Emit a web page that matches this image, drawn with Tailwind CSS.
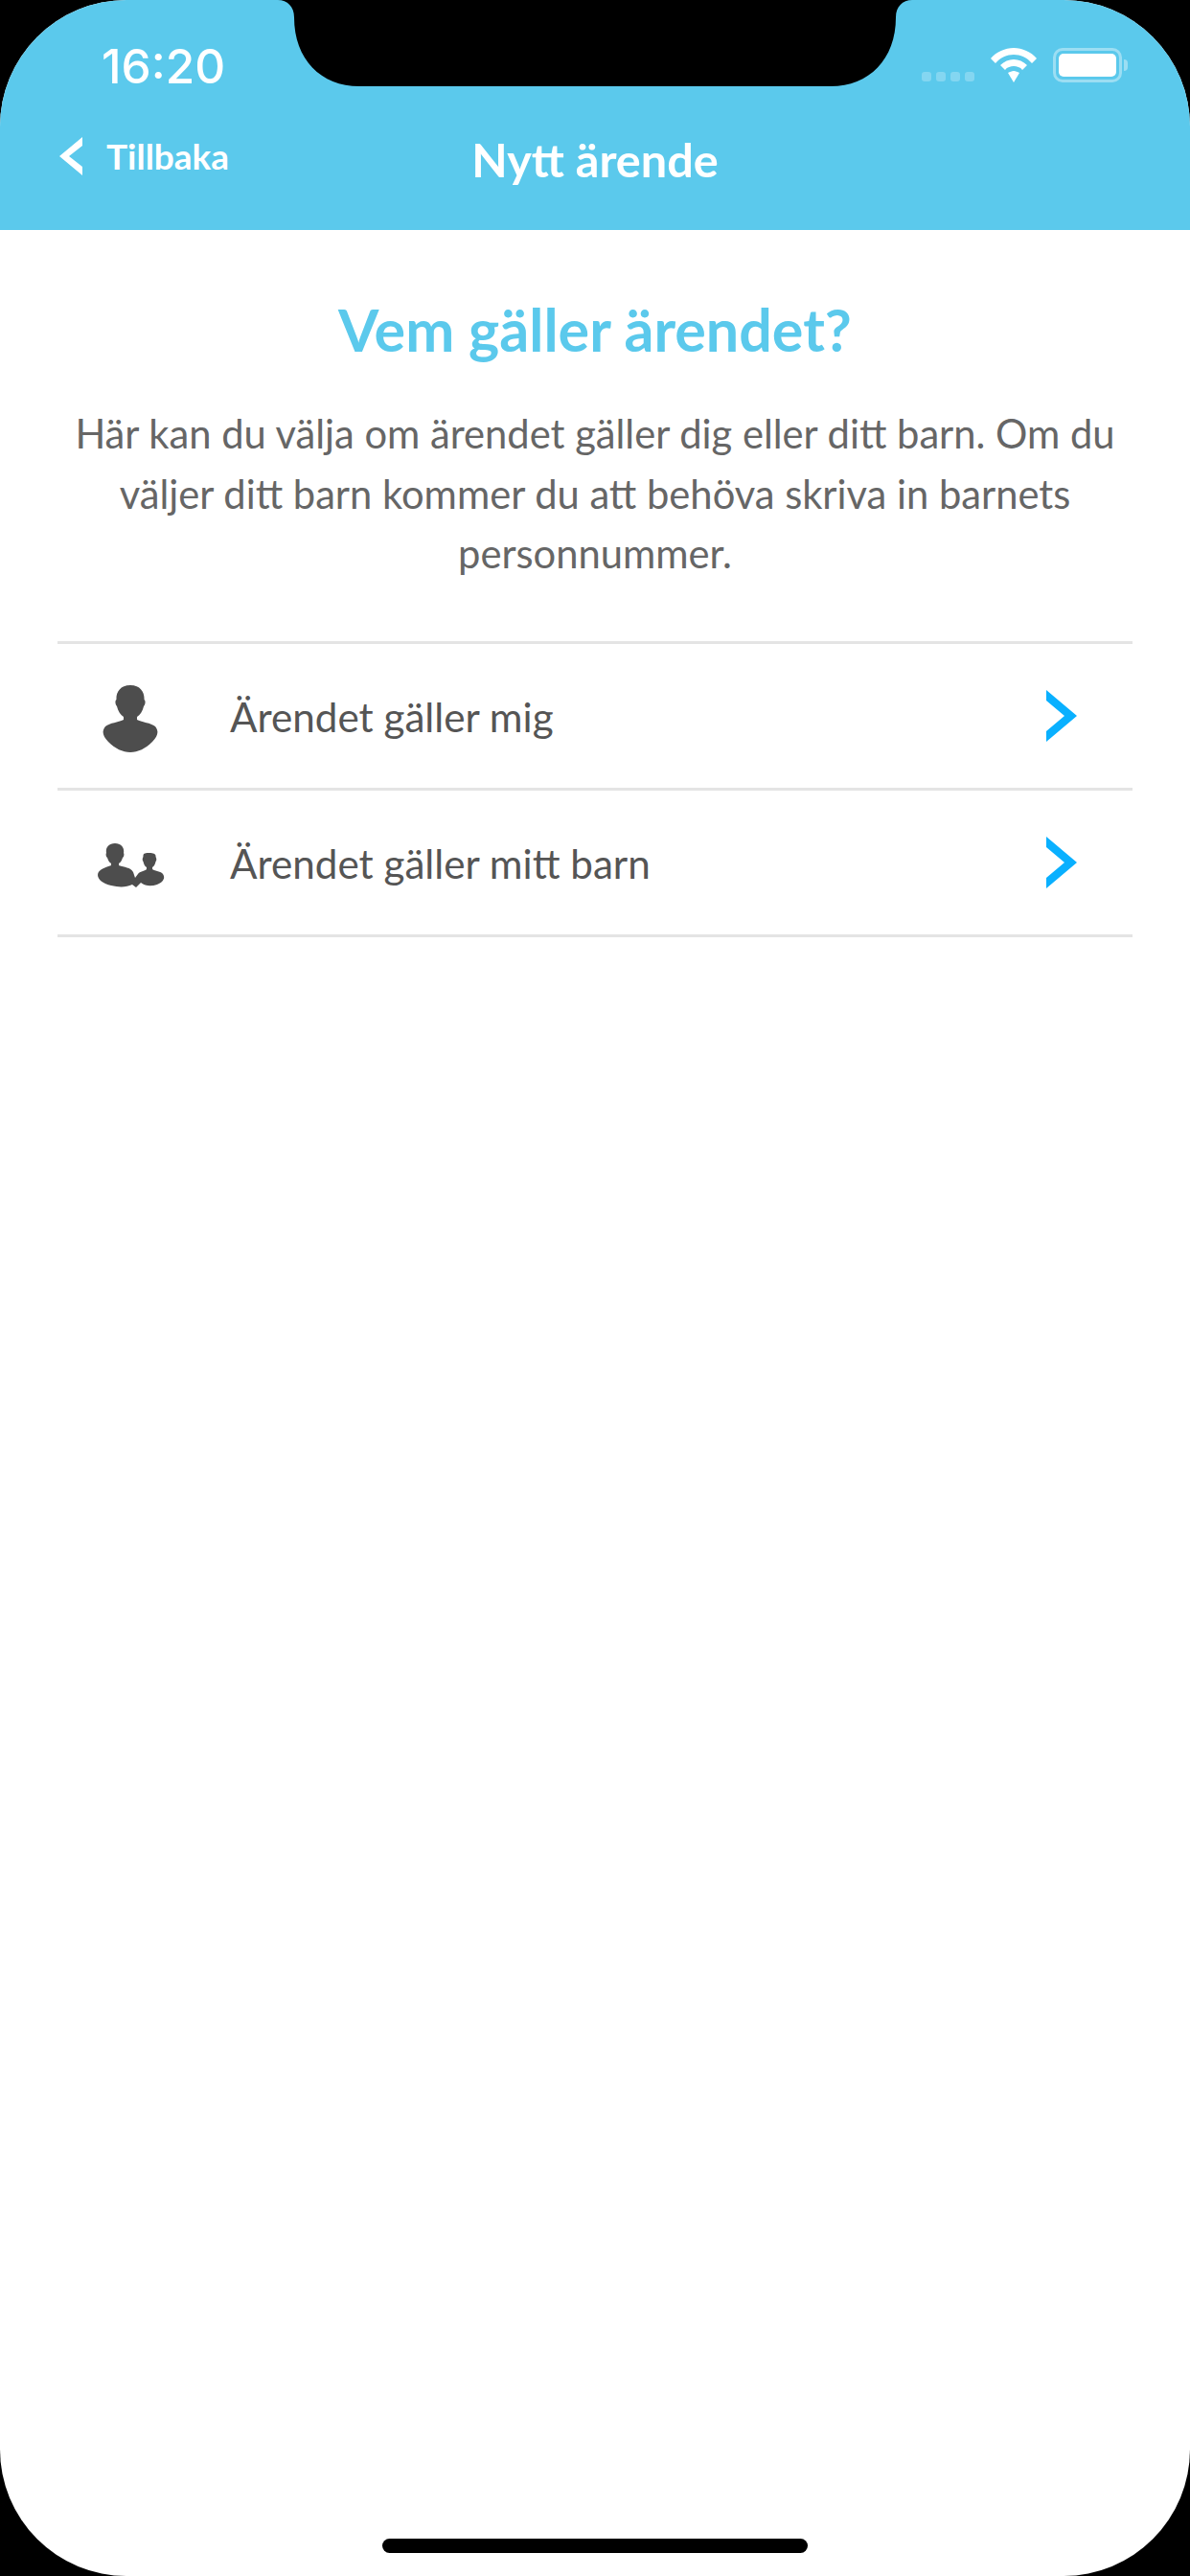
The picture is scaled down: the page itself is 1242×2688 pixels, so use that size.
<!DOCTYPE html>
<html lang="sv">
<head>
<meta charset="utf-8" />
<title>Nytt ärende</title>
<script src="https://cdn.jsdelivr.net/npm/@tailwindcss/browser@4"></script>
</head>
<body class="bg-black font-['Lato',sans-serif]">
<div class="relative w-[1242px] h-[2688px] bg-white rounded-[132px] overflow-hidden flex flex-col">

    <!-- notch -->
    <svg class="absolute left-[290px] top-0" width="662" height="90" viewBox="0 0 662 90">
        <path fill="#000" d="M0 0 C10 0 17 7 17 18 C17 62 45 90 85 90 L577 90 C617 90 645 62 645 18 C645 7 652 0 662 0 Z" />
    </svg>

    <!-- header -->
    <header class="h-[240px] shrink-0 bg-[#5bc9ec] text-white flex flex-col">
        <div class="h-[140px] pt-[40px] pl-[106px] pr-[65px] flex items-start justify-between">
            <span class="font-['Inter',sans-serif] font-medium text-[49.5px] leading-[58px]">16:20</span>
            <div class="flex items-end gap-[16px] mt-[10px] h-[36px]">
                <div class="flex gap-[5px] mb-[1px]">
                    <span class="w-[10px] h-[10px] rounded-[3px] bg-white/25"></span>
                    <span class="w-[10px] h-[10px] rounded-[3px] bg-white/25"></span>
                    <span class="w-[10px] h-[10px] rounded-[3px] bg-white/25"></span>
                    <span class="w-[10px] h-[10px] rounded-[3px] bg-white/25"></span>
                </div>
                <svg width="50" height="36" viewBox="0 0 50 36">
                    <path fill="#fff" d="M25 0 C34 0 43 4 49 11 L44 16 C39 10 32 7 25 7 C18 7 11 10 6 16 L1 11 C7 4 16 0 25 0 Z" />
                    <path fill="#fff" d="M25 12 C30 12 35 14 39 18 L34 23 C32 20 28 19 25 19 C22 19 18 20 16 23 L11 18 C15 14 20 12 25 12 Z" />
                    <path fill="#fff" d="M25 24 C27 24 29 25 31 26 L25 36 L19 26 C21 25 23 24 25 24 Z" />
                </svg>
                <div class="flex items-center gap-[2px]">
                    <div class="w-[72px] h-[36px] rounded-[10px] border-[3px] border-white/40 p-[3px]">
                        <div class="w-full h-full rounded-[5px] bg-white"></div>
                    </div>
                    <div class="w-[4px] h-[12px] rounded-r-[4px] bg-white/40"></div>
                </div>
            </div>
        </div>
        <div class="relative flex items-center justify-center h-[50px] mt-[1px]">
            <div class="absolute left-[62px] top-[0px] flex items-center gap-[25px]">
                <svg width="24" height="40" viewBox="0 0 24 40">
                    <path fill="#fff" d="M24 0 L0 20 L24 40 L24 31 L10 20 L24 9 Z" />
                </svg>
                <span class="text-[37px] font-bold leading-[44px]">Tillbaka</span>
            </div>
            <h1 class="text-[48.6px] font-bold leading-[50px]">Nytt ärende</h1>
        </div>
    </header>

    <!-- intro -->
    <section class="pt-[69px] px-[60px] text-center">
        <h2 class="text-[61px] leading-[70px] font-bold text-[#5bc9ec]">Vem gäller ärendet?</h2>
        <p class="mt-[42px] text-[41.7px] leading-[62.5px] text-[#666666]">Här kan du välja om ärendet gäller dig eller ditt barn. Om du väljer ditt barn kommer du att behöva skriva in barnets personnummer.</p>
    </section>

    <!-- choices -->
    <ul class="mt-[60px] mx-[60px] border-t-[3px] border-[#e4e4e4] text-[42.2px] text-[#555555]">
        <li class="h-[153px] border-b-[3px] border-[#e4e4e4] flex items-center">
            <div class="w-[180px] pl-[47px] pt-[6px] shrink-0">
                <svg class="block" width="58" height="70" viewBox="0 0 58 70">
                    <path fill="#4d4d4d" d="M29 0 C40 0 44 8 43.500 15 C45 16 45 20 43 22 C42 27 39 31 36 33 L36 36 C42 39 50 39 55 43 C59 48 58 53 52 59 C45 66 37 70 29 70 C21 70 13 66 6 59 C0 53 -1 48 3 43 C8 39 16 39 22 36 L22 33 C19 31 16 27 15 22 C13 20 13 16 14.500 15 C14 8 18 0 29 0 Z" />
                </svg>
            </div>
            <span class="flex-1 mt-[3px]">Ärendet gäller mig</span>
            <svg class="mr-[58px]" width="32" height="54" viewBox="0 0 32 54">
                <path fill="#09b0ff" d="M0 0 L32 27 L0 54 L0 43 L19 27 L0 11 Z" />
            </svg>
        </li>
        <li class="h-[153px] border-b-[3px] border-[#e4e4e4] flex items-center">
            <div class="w-[180px] pl-[42px] pt-[6px] shrink-0">
                <svg class="block" width="70" height="46" viewBox="0 0 70 46">
                    <path fill="#4d4d4d" d="M18 0 C25 0 28 5 27 10 C28 12 27 14 26 15 C25 18 24 20 22 21 L22 23 C28 25 34 25 37 30 L39 36 L42 32 C44 29 49 29 51 27 L51 25 C49 24 48 21 47.500 19 C46 17 47 15 47.500 14 C47 10 50 10 54 10 C58 10 61 11 60.500 14 C61 15 62 17 60.500 19 C60 21 59 24 57 25 L57 27 C60 29 66 29 68 32 C71 36 68 41 62 43 C56 45 50 45 45 41 L40 46 L36 43 C30 46 22 46 14 44 C6 42 0 38 0 33 C0 27 9 25 14 23 L14 21 C12 20 11 18 10 15 C9 14 8 12 9 10 C8 5 11 0 18 0 Z" />
                </svg>
            </div>
            <span class="flex-1 mt-[3px]">Ärendet gäller mitt barn</span>
            <svg class="mr-[58px]" width="32" height="54" viewBox="0 0 32 54">
                <path fill="#09b0ff" d="M0 0 L32 27 L0 54 L0 43 L19 27 L0 11 Z" />
            </svg>
        </li>
    </ul>

    <!-- home indicator -->
    <div class="mt-auto mb-[24px] mx-auto w-[444px] h-[15px] rounded-full bg-black"></div>
</div>
</body>
</html>
